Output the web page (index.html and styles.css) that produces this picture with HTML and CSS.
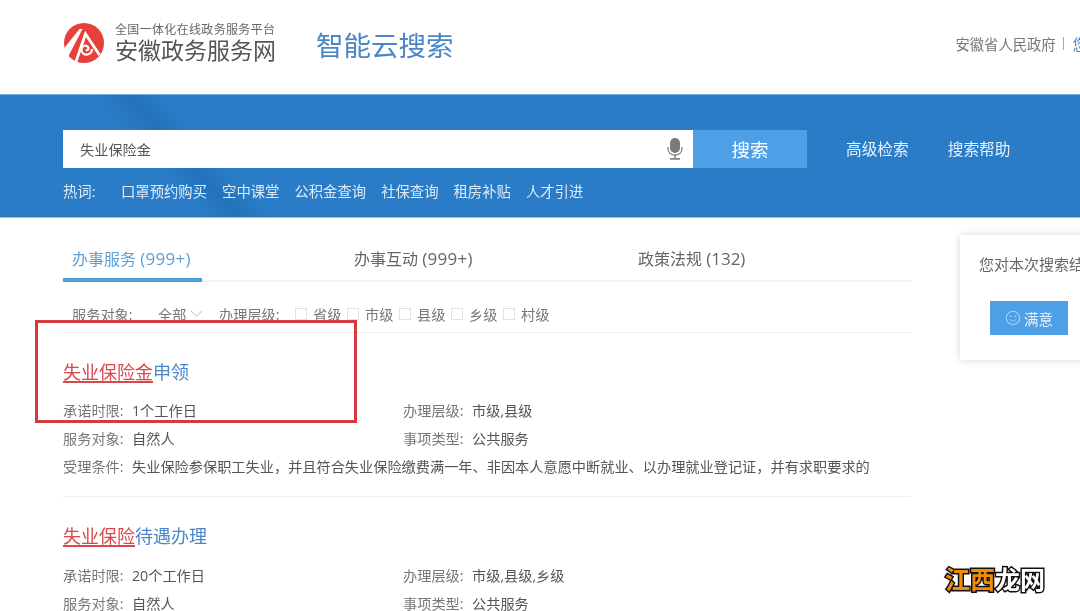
FILE: index.html
```html
<!DOCTYPE html>
<html lang="zh-CN">
<head>
<meta charset="utf-8">
<title>智能云搜索</title>
<link rel="stylesheet" href="styles.css">
</head>
<body>
<div class="page">
  <header class="top">
    <svg class="logo" viewBox="0 0 42 42" width="42" height="42">
      <circle cx="21" cy="21" r="20" fill="#e5403a"/>
      <path d="M0.500 27 L16.500 7 L19.500 7 L5 35 Z" fill="#fff"/>
      <path d="M12.500 41 L22.500 12 L36.500 33" fill="none" stroke="#fff" stroke-width="2.800"/>
      <path d="M29 27 C29 34 19 34.500 18.500 28 C18.300 24 22.500 22 25 25 C26.200 27 24.500 28.800 22.800 28" fill="none" stroke="#fff" stroke-width="2.200"/>
    </svg>
    <div class="brand">
      <div class="brand-sub">全国一体化在线政务服务平台</div>
      <div class="brand-main">安徽政务服务网</div>
    </div>
    <div class="top-sep"></div>
    <div class="product">智能云搜索</div>
    <div class="top-right"><span>安徽省人民政府</span><i class="bar"></i><span class="you">您好</span></div>
  </header>

  <section class="band">
    <div class="search-row">
      <div class="search-box">
        <span class="query">失业保险金</span>
        <svg class="mic" viewBox="0 0 18 24" width="18" height="24">
          <rect x="4" y="1" width="10" height="15" rx="5" fill="#7b7b7b"/>
          <path d="M2 10 V11 C2 15.500 5 18 9 18 C13 18 16 15.500 16 11 V10" fill="none" stroke="#8a8a8a" stroke-width="1.400"/>
          <rect x="8.200" y="18" width="1.600" height="3" fill="#8a8a8a"/>
          <rect x="4" y="21" width="10" height="1.800" fill="#8a8a8a"/>
        </svg>
      </div>
      <div class="search-btn">搜索</div>
      <a class="band-link">高级检索</a>
      <a class="band-link">搜索帮助</a>
    </div>
    <div class="hot">
      <span class="hot-label">热词:</span>
      <span>口罩预约购买</span><span>空中课堂</span><span>公积金查询</span><span>社保查询</span><span>租房补贴</span><span>人才引进</span>
    </div>
  </section>

  <div class="content">
    <main class="results">
      <nav class="tabs">
        <a class="tab tab-a active">办事服务 <span class="n">(999+)</span></a>
        <a class="tab tab-b">办事互动 <span class="n">(999+)</span></a>
        <a class="tab tab-c">政策法规 <span class="n">(132)</span></a>
      </nav>
      <div class="filters">
        <span class="f-label">服务对象:</span>
        <span class="f-all">全部</span>
        <svg class="chev" viewBox="0 0 13 7" width="13" height="7"><path d="M1 1 L6.500 6 L12 1" fill="none" stroke="#bbb" stroke-width="1"/></svg>
        <span class="f-label2">办理层级:</span>
        <label class="chk"><i></i>省级</label>
        <label class="chk"><i></i>市级</label>
        <label class="chk"><i></i>县级</label>
        <label class="chk"><i></i>乡级</label>
        <label class="chk"><i></i>村级</label>
      </div>

      <article class="item">
        <h3 class="title"><em>失业保险金</em>申领</h3>
        <div class="meta">
          <div><span class="k">承诺时限:</span><b>1个工作日</b></div><div><span class="k">办理层级:</span><b>市级,县级</b></div>
          <div><span class="k">服务对象:</span><b>自然人</b></div><div><span class="k">事项类型:</span><b>公共服务</b></div>
          <div class="wide"><span class="k">受理条件:</span><b>失业保险参保职工失业，并且符合失业保险缴费满一年、非因本人意愿中断就业、以办理就业登记证，并有求职要求的</b></div>
        </div>
      </article>

      <article class="item">
        <h3 class="title"><em>失业保险</em>待遇办理</h3>
        <div class="meta">
          <div><span class="k">承诺时限:</span><b>20个工作日</b></div><div><span class="k">办理层级:</span><b>市级,县级,乡级</b></div>
          <div><span class="k">服务对象:</span><b>自然人</b></div><div><span class="k">事项类型:</span><b>公共服务</b></div>
        </div>
      </article>
    </main>

    <aside class="survey">
      <p>您对本次搜索结果满意吗</p>
      <div class="ok-btn">
        <svg viewBox="0 0 18 18" width="16" height="16"><circle cx="9" cy="9" r="7.500" fill="none" stroke="#a9d0f2" stroke-width="1.200"/><circle cx="6.300" cy="7" r="1" fill="#a9d0f2"/><circle cx="11.700" cy="7" r="1" fill="#a9d0f2"/><path d="M5.500 10.500 C7 13 11 13 12.500 10.500" fill="none" stroke="#a9d0f2" stroke-width="1.100"/></svg>
        <span>满意</span>
      </div>
    </aside>
  </div>

  <div class="redbox"></div>
  <div class="mark"><span class="orange">江西</span>龙网</div>
</div>
</body>
</html>
```
FILE: styles.css
```css
* { box-sizing: border-box; }
html, body { margin: 0; padding: 0; height: 100%; overflow: hidden; background: #fff; }
body { font-family: "Open Sans", "Noto Sans CJK SC", "Liberation Sans", sans-serif; color: #666; }
.page { position: relative; width: 1080px; height: 611px; overflow: hidden; filter: blur(0.45px); }

.top { height: 94px; display: flex; align-items: center; padding-left: 63px; }
.logo { flex: none; margin-top: -8px; }
.brand { margin-left: 10px; width: 162px; margin-top: -8px; }
.brand-sub { font-size: 12px; line-height: 14px; letter-spacing: .33px; color: #666; white-space: nowrap; }
.brand-main { font-size: 23px; line-height: 26px; color: #555; white-space: nowrap; }
.top-sep { width: 1px; height: 48px; background: #eee; margin-left: 21px; margin-top: -4px; }
.product { font-size: 27.500px; line-height: 36px; color: #4a86c8; margin-left: 19px; white-space: nowrap; margin-top: -2px; }
.top-right { margin-left: 502px; display: flex; align-items: center; font-size: 14.300px; color: #777; white-space: nowrap; margin-top: -7px; }
.bar { width: 1px; height: 13px; background: #aaa; margin: 0 9px 0 7px; }
.you { color: #4a86c8; }

.band {
  height: 124px; padding: 35px 0 0 63px; color: #fff;
  border-top: 1px solid #6fb0df; border-bottom: 1px solid #8cc3e8;
  background:
    linear-gradient(47deg, transparent 150px, rgba(20,90,160,.3) 175px, transparent 200px),
    #2a7cc7;
}
.search-row { display: flex; align-items: center; height: 38px; }
.search-box { width: 630px; height: 38px; background: #fff; display: flex; align-items: center; justify-content: space-between; padding: 0 9px 0 17px; }
.query { font-size: 14.200px; color: #555; }
.mic { display: block; }
.search-btn { width: 114px; height: 38px; line-height: 40px; text-align: center; font-size: 18.500px; background: #4d9fe6; color: #fff; }
.band-link { font-size: 15.700px; line-height: 38px; color: #e6f1fb; margin-left: 39px; white-space: nowrap; }
.hot { display: flex; gap: 15px; margin-top: 13px; font-size: 14.350px; line-height: 22px; color: #dcebf8; white-space: nowrap; }
.hot-label { width: 43px; }

.content { display: flex; padding-left: 63px; }
.results { width: 848px; flex: none; }
.survey {
  flex: none; width: 240px; height: 125px; margin: 17px 0 0 49px; padding: 17px 0 0 19px;
  background: #fff; box-shadow: 0 0 8px rgba(0,0,0,.16);
}
.survey p { margin: 0; font-size: 15px; line-height: 24px; color: #666; white-space: nowrap; }
.ok-btn { width: 78px; height: 34px; margin: 25px 0 0 11px; background: #4d9fe6; display: flex; align-items: center; justify-content: center; gap: 3px; color: #e6f2fc; font-size: 14.500px; }
.ok-btn svg { display: block; }

.tabs { height: 64px; border-bottom: 2px solid #f4f4f4; display: flex; }
.tab { font-size: 16px; line-height: 24px; padding-top: 29px; color: #666; white-space: nowrap; }
.tab .n { font-size: 17px; }
.tab-a .n, .tab-b .n { letter-spacing: .3px; }
.tab-a { width: 139px; padding-left: 9px; color: #5f9fd4; height: 64px; border-bottom: 4px solid #4d9fd8; }
.tab-b { margin-left: 152px; width: 284px; }
.filters { height: 51px; border-bottom: 1px solid #eee; display: flex; align-items: center; padding: 13px 0 0 9px; font-size: 14.200px; color: #777; white-space: nowrap; }
.f-label { width: 86px; }
.f-all { width: 32px; }
.chev { margin-right: 16px; }
.f-label2 { width: 76px; }
.chk { display: flex; align-items: center; width: 52px; }
.chk i { width: 12px; height: 12px; border: 1px solid #e2e2e2; margin-right: 6px; flex: none; }

.item { padding-top: 24px; height: 164px; border-bottom: 1px solid #eee; }
.title { margin: 0; font-size: 18px; font-weight: normal; line-height: 30px; color: #4a86c8; }
.title em { font-style: normal; color: #d9484a; text-decoration: underline; text-underline-offset: 2px; text-decoration-thickness: 1.500px; }
.meta { margin-top: 10px; display: grid; grid-template-columns: 340px 1fr; grid-auto-rows: 28px; font-size: 14.200px; line-height: 28px; color: #777; white-space: nowrap; }
.meta b { font-weight: normal; color: #555; }
.meta .k { display: inline-block; width: 69px; }
.meta .wide { grid-column: 1 / 3; }
.item + .item { border-bottom: 0; }
.item + .item .meta { margin-top: 11px; }

.redbox { position: absolute; left: 35px; top: 320px; width: 322px; height: 103px; border: 3px solid #d8383f; }
.mark { position: absolute; left: 945px; top: 562px; font-size: 25px; line-height: 34px; font-weight: 700; color: #fff; white-space: nowrap; -webkit-text-stroke: 3px #111; paint-order: stroke fill; }
.orange { color: #f08c0a; }
```
